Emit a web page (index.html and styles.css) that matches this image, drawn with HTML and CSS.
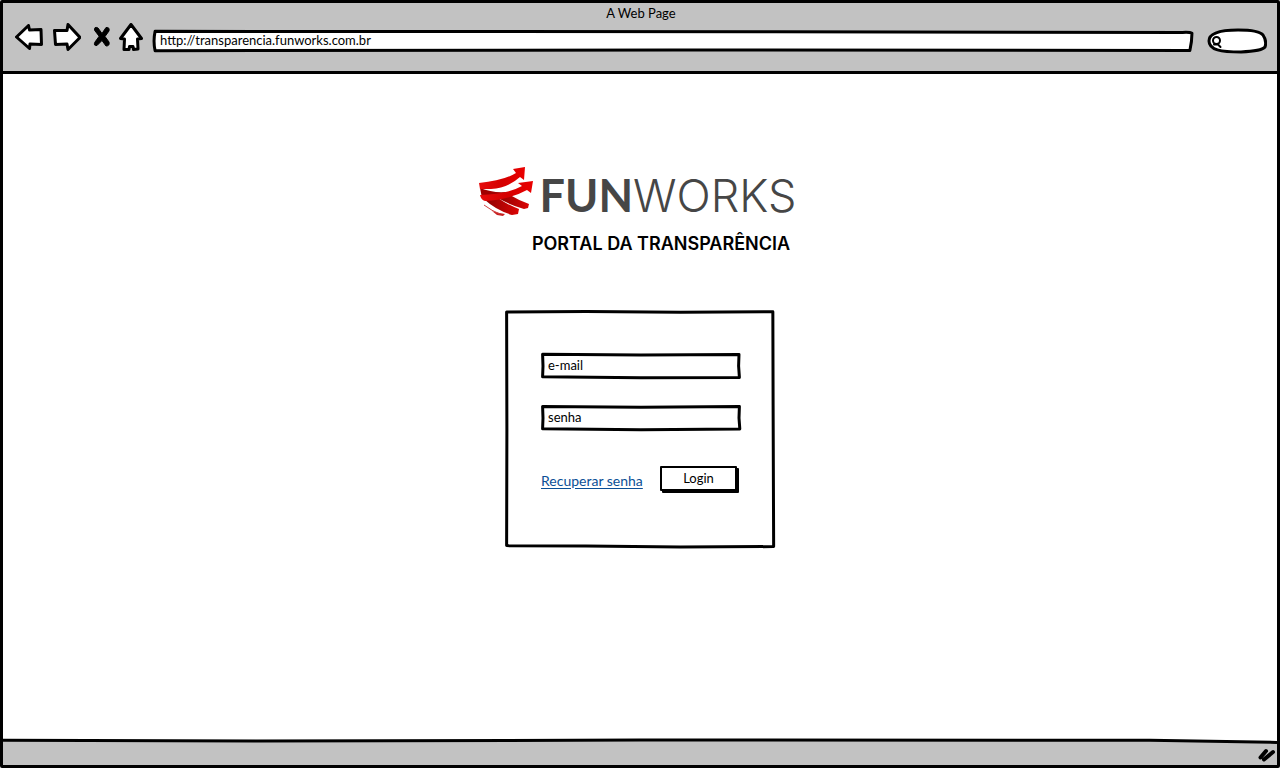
FILE: index.html
```html
<!DOCTYPE html>
<html lang="pt-BR">
<head>
<meta charset="utf-8">
<title>A Web Page</title>
<link rel="stylesheet" href="styles.css">
</head>
<body>
<div class="window">
  <header class="toolbar">
    <div class="window-title">A Web Page</div>
    <div class="controls">
      <nav class="nav" aria-label="Navegador">
        <button type="button" aria-label="Voltar"><svg width="28" height="26" viewBox="0 0 28 26"><path d="M1.5 13 13.500 1.500 14.500 6 26 5.500 26.500 20.500 15 20 14.500 24.500Z"/></svg></button>
        <button type="button" aria-label="Avançar"><svg width="28" height="28" viewBox="0 0 28 28"><path d="M1.500 7.500 14 7.500 15 1.500 27 14.500 15 26.500 14 21 2.500 21.500Z"/></svg></button>
        <button type="button" class="stop" aria-label="Parar"><svg width="18" height="22" viewBox="0 0 18 22"><path class="solid" d="M1.500 4Q1 0 5 2L9 7.500 13 1.500Q17 1 16 5L12 10.500 16 16Q17 20 13 20L9 14.500 4 19.500Q0 20 2 16L6 10.500Z"/></svg></button>
        <button type="button" aria-label="Início"><svg width="24" height="28" viewBox="0 0 24 28"><path d="M12 1.500 22.500 15.500 18.500 16 19 26 14.500 26.500 14 23.500 10.500 23.500 10 26.500 5 26.500 5.500 16 1.500 15.500Z"/></svg></button>
      </nav>
      <label class="address">
        <svg class="sketch" viewBox="0 0 100 100" preserveAspectRatio="none"><path d="M.2 6Q0 50 .2 94L50 91 99.700 93Q99.900 50 99.900 15Q99.700 9 99 11L60 8Z"/></svg>
        <input type="text" value="http://transparencia.funworks.com.br" aria-label="Endereço">
      </label>
      <label class="search">
        <svg class="outline" width="60" height="26" viewBox="0 0 60 26"><path d="M2 13C2 5 13 2 31 2Q52 2 56 7Q60 13 58 19Q55 23 34 24C14 24 2 22 2 13Z"/><circle class="lens" cx="9.500" cy="12.500" r="3.500"/><path class="lens" d="M7 16.500 11 16.500 13.500 19"/></svg>
        <input type="search" aria-label="Buscar">
      </label>
    </div>
  </header>

  <main class="page">
    <div class="brand">
      <svg class="mark" width="56" height="52" viewBox="0 0 56 52">
        <defs>
          <linearGradient id="red" x1="0" x2="1"><stop offset="0" stop-color="#e60c0c"/><stop offset=".5" stop-color="#d40000"/><stop offset="1" stop-color="#ea0000"/></linearGradient>
          <linearGradient id="dark" x1="0" x2="1"><stop offset="0" stop-color="#8c0000"/><stop offset="1" stop-color="#dc0505"/></linearGradient>
        </defs>
        <path fill="url(#dark)" d="M7 33 20 31Q30 38 41 42L40 47 34 48Q18 43 7 33Z"/>
        <path fill="url(#dark)" d="M20 31 32 28Q42 34 51 37L50 41 46 42Q32 38 20 31Z"/>
        <path fill="#c82020" d="M14 44Q20 46 27 47L25 49 19 48Z"/>
        <path fill="none" stroke="#d04040" stroke-width="1" d="M6 38Q14 44 22 47"/>
        <path fill="#a00000" d="M2 21Q14 26 28 25L26 31 4 31Z"/>
        <path fill="url(#red)" d="M1 16Q25 14 38 6L35 2 47 0 46 13 42 10Q30 21 13 22 7 22 2 22Z"/>
        <path fill="url(#red)" d="M2 28Q30 27 44 19L40 16 55 14 53 26 49 23Q31 33 7 34 3 33 2 28Z"/>
      </svg>
      <h1 class="wordmark"><b>FUN</b>WORKS</h1>
    </div>
    <h2 class="subtitle">PORTAL DA TRANSPARÊNCIA</h2>

    <form class="card">
      <svg class="sketch" viewBox="0 0 100 100" preserveAspectRatio="none"><path d="M.6.8 30 .6 65 .9 99.200.7 99.300 40 99.500 99.400 65 99.600 30 99.200.6 99 .7 50Z"/></svg>
      <label class="field">
        <svg class="sketch" viewBox="0 0 100 100" preserveAspectRatio="none"><path d="M.8 5 50 8 99 6 98.800 50 99.200 94 50 95 .8 91 1 50Z"/></svg>
        <input type="text" value="e-mail" aria-label="e-mail">
      </label>
      <label class="field">
        <svg class="sketch" viewBox="0 0 100 100" preserveAspectRatio="none"><path d="M.8 6 50 9 99.200 6 99 50 99.400 92 50 95 .8 91 1 50Z"/></svg>
        <input type="text" value="senha" aria-label="senha">
      </label>
      <div class="actions">
        <a href="#recuperar">Recuperar senha</a>
        <button type="submit" class="login">Login</button>
      </div>
    </form>
  </main>

  <footer class="statusbar">
    <svg class="sketch" viewBox="0 0 100 100" preserveAspectRatio="none"><path class="fill" d="M0 5 50 3 90 3 100 12V100H0Z"/><path class="edge" d="M0 5 20 8 50 4 90 5 100 13"/></svg>
    <svg class="grip" width="18" height="14" viewBox="0 0 18 14"><path d="M2.500 9.500 8 3M6 11.500 15 4"/></svg>
  </footer>
</div>
</body>
</html>
```
FILE: styles.css
```css
* { box-sizing: border-box; }

body {
  margin: 0;
  background: #fff;
  color: #000;
  font-family: Lato, "Liberation Sans", sans-serif;
  font-size: 13px;
  line-height: 16px;
}

button, input {
  font: inherit;
  color: inherit;
  background: transparent;
  border: 0;
  padding: 0;
}

.window {
  display: flex;
  flex-direction: column;
  min-height: 100vh;
  border: 3px solid #000;
  border-radius: 2px;
}

.toolbar {
  height: 71px;
  padding: 2px 10px 0 12px;
  background: #c2c2c2;
  border-bottom: 3px solid #000;
}

.window-title { text-align: center; }

.controls {
  display: flex;
  align-items: center;
  gap: 14px;
  height: 40px;
}

.nav {
  display: flex;
  align-items: center;
  gap: 10px;
  height: 28px;
  margin-bottom: 8px;
}

.nav button { display: block; line-height: 0; }
.nav .stop { margin: 0 -2px 0 2px; }
.nav + .address { margin-left: -4px; }

.nav path, .outline path, .outline circle {
  fill: #fff;
  stroke: #000;
  stroke-width: 3;
  stroke-linejoin: round;
  stroke-linecap: round;
}

.nav .solid { fill: #000; stroke-width: 1; }
.outline .lens { fill: none; stroke-width: 2; }

.sketch {
  position: absolute;
  inset: 0;
  width: 100%;
  height: 100%;
  overflow: visible;
}

.sketch path {
  fill: #fff;
  stroke: #000;
  stroke-width: 3;
  stroke-linejoin: round;
  vector-effect: non-scaling-stroke;
}

.address, .search, .field {
  position: relative;
  display: flex;
}

.address { flex: 1; height: 22px; }
.search { width: 60px; height: 26px; }
.outline { position: absolute; inset: 0; }
.search input { margin-left: 18px; }

.address input, .search input, .field input {
  position: relative;
  width: 100%;
  min-width: 0;
  outline: 0;
}

.address input { padding: 0 7px 2px; }

.page {
  flex: 1;
  display: flex;
  flex-direction: column;
  align-items: center;
  padding-top: 91px;
}

.brand {
  display: flex;
  align-items: center;
  gap: 6px;
  margin-right: 6px;
}

.wordmark {
  margin: 0;
  padding-top: 6px;
  color: #464646;
  font-family: Inter, Lato, sans-serif;
  font-size: 45px;
  font-weight: 300;
  line-height: 48px;
}

.wordmark b {
  font-family: Lato, sans-serif;
  font-weight: 700;
}

.subtitle {
  margin: 12px 0 0 42px;
  font-family: Inter, Lato, sans-serif;
  font-size: 18px;
  font-weight: 600;
  line-height: 24px;
}

.card {
  position: relative;
  display: flex;
  flex-direction: column;
  gap: 26px;
  width: 270px;
  margin-top: 54px;
  padding: 43px 34px 57px 36px;
}

.field { height: 26px; }
.field input { padding: 0 7px 2px; }

.actions {
  position: relative;
  display: flex;
  justify-content: space-between;
  align-items: center;
  padding-top: 9px;
}

.actions a {
  padding-top: 4px;
  color: #0b4f96;
  font-size: 14px;
  text-underline-offset: 2px;
}

.login {
  width: 77px;
  height: 25px;
  margin-right: 4px;
  padding-bottom: 2px;
  background: #fff;
  border: 2px solid #000;
  border-radius: 1px;
  box-shadow: 2px 2px 0 #000;
}

.statusbar {
  position: relative;
  display: flex;
  justify-content: flex-end;
  align-items: center;
  height: 26px;
  padding: 5px 1px 0 0;
}

.sketch .fill { fill: #c2c2c2; stroke: none; }
.sketch .edge { fill: none; }

.grip {
  position: relative;
  fill: none;
  stroke: #000;
  stroke-width: 4;
  stroke-linecap: round;
}
```
